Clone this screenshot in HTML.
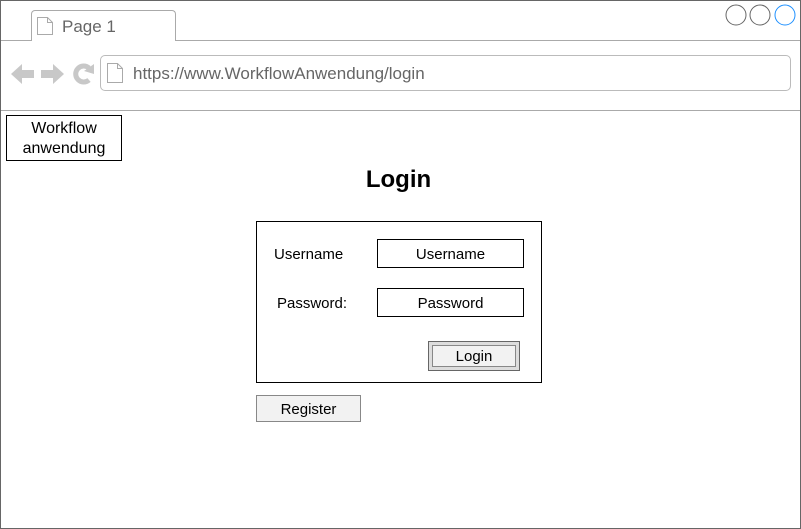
<html><head><style>
body{margin:0;width:801px;height:529px;position:relative;font-family:"Liberation Sans",sans-serif;background:#fff;overflow:hidden}
.a{position:absolute;box-sizing:border-box}
</style></head><body>
<div class="a" style="left:0;top:0;width:801px;height:529px;border:1px solid #666"></div>
<div class="a" style="left:1px;top:40px;width:799px;height:1px;background:#aaa"></div>
<div class="a" style="left:31px;top:10px;width:145px;height:31px;border:1px solid #aaa;border-bottom:none;border-radius:4px 4px 0 0;background:#fff"></div>
<svg class="a" style="left:36px;top:16px" width="18" height="20"><path d="M1.5 1.5h10l5 5v12h-15z M11.5 1.5v5h5" fill="#fff" stroke="#aaa"/></svg>
<div class="a" style="left:62px;top:17px;font-size:17px;color:#666">Page 1</div>
<svg class="a" style="left:722px;top:2px" width="78" height="26"><circle cx="14" cy="13" r="10" fill="none" stroke="#666"/><circle cx="38" cy="13" r="10" fill="none" stroke="#666"/><circle cx="63" cy="13" r="10" fill="none" stroke="#1e90ff"/></svg>
<svg class="a" style="left:0;top:55px" width="100" height="40"><path d="M11 19L22 9v6h12v8H22v6z" fill="#c8c8c8"/><path d="M64 19L53 9v6H41v8h12v6z" fill="#c8c8c8"/><path d="M89 13A8 8 0 1 0 89 25" fill="none" stroke="#c8c8c8" stroke-width="5"/><path d="M84 16L94 9L94 19z" fill="#c8c8c8"/></svg>
<div class="a" style="left:100px;top:55px;width:691px;height:36px;border:1px solid #bbb;border-radius:5px"></div>
<svg class="a" style="left:106px;top:62px" width="18" height="22"><path d="M1.5 1.5h10l5 5v14h-15z M11.5 1.5v5h5" fill="#fff" stroke="#aaa"/></svg>
<div class="a" style="left:133px;top:64px;font-size:17px;color:#666">https://www.WorkflowAnwendung/login</div>
<div class="a" style="left:1px;top:110px;width:799px;height:1px;background:#aaa"></div>
<div class="a" style="left:6px;top:115px;width:116px;height:46px;border:1px solid #000;text-align:center;font-size:16px;line-height:20px;padding-top:3px">Workflow<br>anwendung</div>
<div class="a" style="left:-2px;width:801px;top:166px;text-align:center;font-size:24px;font-weight:bold">Login</div>
<div class="a" style="left:256px;top:221px;width:286px;height:162px;border:1px solid #000"></div>
<div class="a" style="left:274px;top:246px;font-size:15px">Username</div>
<div class="a" style="left:277px;top:295px;font-size:15px">Password:</div>
<div class="a" style="left:377px;top:239px;width:147px;height:29px;border:1px solid #000;text-align:center;font-size:15px;line-height:29px">Username</div>
<div class="a" style="left:377px;top:288px;width:147px;height:29px;border:1px solid #000;text-align:center;font-size:15px;line-height:29px">Password</div>
<div class="a" style="left:428px;top:341px;width:92px;height:30px;border:1px solid #666;background:#f2f2f2;box-shadow:inset 0 0 0 3px #ddd,inset 0 0 0 4px #888"></div>
<div class="a" style="left:428px;top:348px;width:92px;text-align:center;font-size:15px">Login</div>
<div class="a" style="left:256px;top:395px;width:105px;height:27px;border:1px solid #888;background:#f2f2f2;text-align:center;font-size:15px;line-height:28px">Register</div>
</body></html>
